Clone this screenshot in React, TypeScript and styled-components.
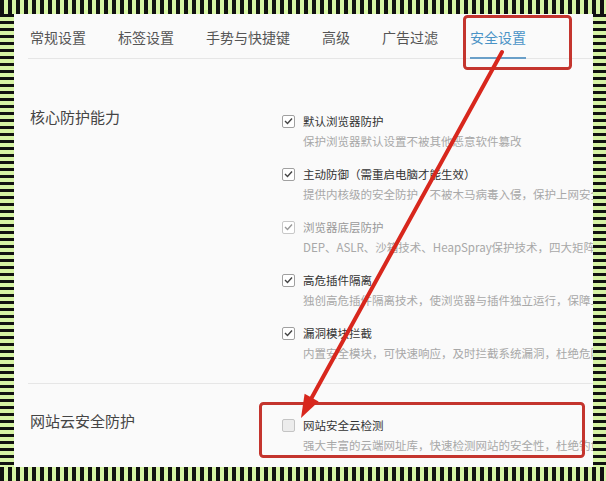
import React from 'react'
import styled, { createGlobalStyle } from 'styled-components'

type Option = {
  label: string,
  desc: string,
  checked: boolean,
  disabled?: boolean,
}

const GlobalStyle = createGlobalStyle`
  html, body {
    margin: 0;
    padding: 0;
    background: #fafafa;
  }
  body {
    font-family: "Noto Sans CJK SC", "Liberation Sans", sans-serif;
  }
`

const green = '#d6f3a4'
const ink = '#111'

const Frame = styled.div`
  position: relative;
  width: 606px;
  height: 481px;
  box-sizing: border-box;
  padding: 14px 13px 14px 14px;
  background:
    repeating-linear-gradient(90deg, ${ ink } 0 4px, ${ green } 4px 8px) left top / 100% 14px no-repeat,
    repeating-linear-gradient(90deg, ${ ink } 0 4px, ${ green } 4px 8px) left bottom / 100% 14px no-repeat,
    repeating-linear-gradient(180deg, ${ ink } 0 3.5px, ${ green } 3.5px 7px) left top / 14px 100% no-repeat,
    repeating-linear-gradient(180deg, ${ ink } 0 3.5px, ${ green } 3.5px 7px) right top / 13px 100% no-repeat;
`

const Panel = styled.div`
  height: 100%;
  display: flex;
  flex-direction: column;
  overflow: hidden;
  background: #fafafa;
`

const TabBar = styled.nav`
  display: flex;
  gap: 32px;
  height: 45px;
  margin-left: 14px;
  padding-left: 2px;
  box-sizing: border-box;
  border-bottom: 1px solid #e6e6e6;
`

const Tab = styled.div<{ $active?: boolean }>`
  box-sizing: border-box;
  height: 45px;
  margin-bottom: -1px;
  padding-top: 13px;
  font-size: 14px;
  line-height: 20px;
  white-space: nowrap;
  color: ${ p => p.$active ? '#4a93c6' : '#555' };
  border-bottom: 2px solid ${ p => p.$active ? '#6a9fc8' : 'transparent' };
`

const Section = styled.section<{ $top: number, $divider?: boolean }>`
  display: flex;
  margin-left: 14px;
  padding: ${ p => p.$top }px 0 20px 2px;
  border-top: ${ p => p.$divider ? '1px solid #e6e6e6' : 'none' };
`

const Title = styled.h3`
  flex: 0 0 252px;
  margin: 0;
  font-size: 15px;
  font-weight: normal;
  line-height: 12px;
  color: #444;
  white-space: nowrap;
`

const Options = styled.div`
  display: flex;
  flex-direction: column;
  gap: 13px;
  min-width: 0;
`

const Row = styled.div`
  display: flex;
  align-items: center;
  gap: 8px;
  height: 20px;
`

const Box = styled.span<{ $checked: boolean, $disabled?: boolean }>`
  display: flex;
  align-items: center;
  justify-content: center;
  width: 13px;
  height: 13px;
  box-sizing: border-box;
  border-radius: 2px;
  border: 1px solid ${ p => p.$disabled ? '#c8c8c8' : p.$checked ? '#a0a0a0' : '#c4c4c4' };
  background: ${ p => p.$checked ? '#fff' : '#ececec' };
  color: ${ p => p.$disabled ? '#999' : '#444' };
`

const Label = styled.span<{ $disabled?: boolean }>`
  font-size: 11.5px;
  line-height: 20px;
  white-space: nowrap;
  color: ${ p => p.$disabled ? '#999' : '#333' };
`

const Desc = styled.div`
  padding-left: 21px;
  font-size: 11.5px;
  line-height: 20px;
  white-space: nowrap;
  color: #a8a8a8;
`

const Markup = styled.svg`
  position: absolute;
  left: 0;
  top: 0;
  pointer-events: none;
`

const tabs = [ '常规设置', '标签设置', '手势与快捷键', '高级', '广告过滤', '安全设置' ]

const coreOptions: Option[] = [
  { label: '默认浏览器防护', desc: '保护浏览器默认设置不被其他恶意软件篡改', checked: true },
  { label: '主动防御（需重启电脑才能生效）', desc: '提供内核级的安全防护，不被木马病毒入侵，保护上网安全', checked: true },
  { label: '浏览器底层防护', desc: 'DEP、ASLR、沙箱技术、HeapSpray保护技术，四大矩阵防护', checked: true, disabled: true },
  { label: '高危插件隔离', desc: '独创高危插件隔离技术，使浏览器与插件独立运行，保障上网安全', checked: true },
  { label: '漏洞模块拦截', desc: '内置安全模块，可快速响应，及时拦截系统漏洞，杜绝危险', checked: true },
]

const cloudOptions: Option[] = [
  { label: '网站安全云检测', desc: '强大丰富的云端网址库，快速检测网站的安全性，杜绝钓鱼网站', checked: false },
]

const Check = () => (
  <svg width="9" height="8" viewBox="0 0 9 8">
    <polyline points="1,4 3.5,6.5 8,1.5" fill="none" stroke="currentColor" strokeWidth="1.4" />
  </svg>
)

const OptionList = ({ items }: { items: Option[] }) => (
  <Options>
    { items.map(item => (
      <div key={ item.label }>
        <Row>
          <Box $checked={ item.checked } $disabled={ item.disabled }>
            { item.checked && <Check /> }
          </Box>
          <Label $disabled={ item.disabled }>{ item.label }</Label>
        </Row>
        <Desc>{ item.desc }</Desc>
      </div>
    )) }
  </Options>
)

const App = () => (
  <Frame>
    <GlobalStyle />
    <Panel>
      <TabBar>
        { tabs.map(t => <Tab key={ t } $active={ t === '安全设置' }>{ t }</Tab>) }
      </TabBar>
      <Section $top={ 52 }>
        <Title>核心防护能力</Title>
        <OptionList items={ coreOptions } />
      </Section>
      <Section $top={ 31 } $divider>
        <Title>网站云安全防护</Title>
        <OptionList items={ cloudOptions } />
      </Section>
    </Panel>
    <Markup width="606" height="481">
      <rect x="464.5" y="16.5" width="106" height="52" rx="3" fill="none" stroke="#c4352e" strokeWidth="3" />
      <rect x="260.5" y="403.5" width="323" height="53" rx="3" fill="none" stroke="#c4352e" strokeWidth="3" />
      <line x1="502" y1="52" x2="311" y2="399" stroke="#d8271d" strokeWidth="4" strokeLinecap="round" />
      <polygon points="301,418 318.6,401.6 304.6,393.8" fill="#d8271d" />
    </Markup>
  </Frame>
)

export default App
